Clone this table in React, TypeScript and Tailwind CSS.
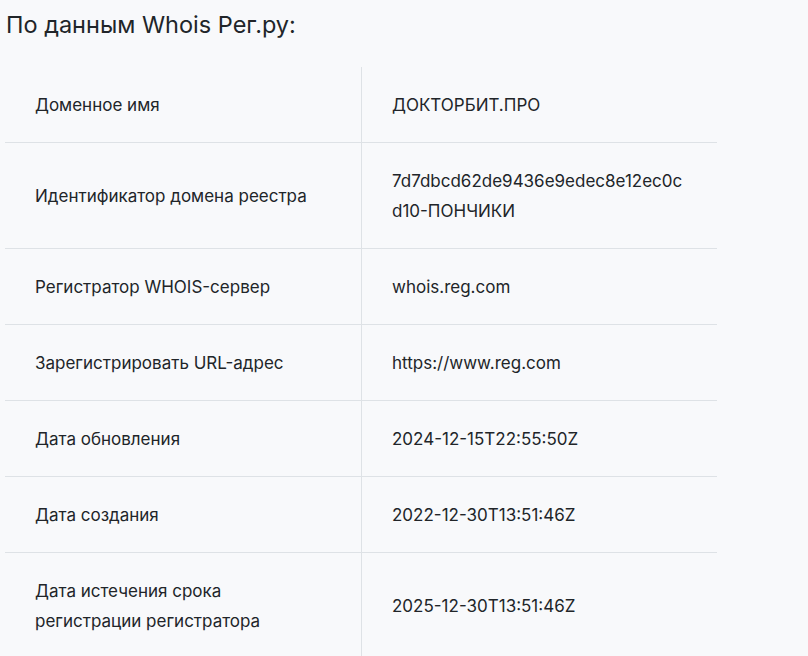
import React from "react";

const rows: [string, string][] = [
  ["Доменное имя", "ДОКТОРБИТ.ПРО"],
  ["Идентификатор домена реестра", "7d7dbcd62de9436e9edec8e12ec0cd10-ПОНЧИКИ"],
  ["Регистратор WHOIS-сервер", "whois.reg.com"],
  ["Зарегистрировать URL-адрес", "https://www.reg.com"],
  ["Дата обновления", "2024-12-15T22:55:50Z"],
  ["Дата создания", "2022-12-30T13:51:46Z"],
  ["Дата истечения срока регистрации регистратора", "2025-12-30T13:51:46Z"],
];

export default function App() {
  return (
    <div
      className="min-h-[656px] w-[808px] overflow-hidden bg-[#f8f9fb] text-[#212529]"
      style={{ fontFamily: "Inter, 'Noto Sans', sans-serif" }}
    >
      <h2 className="pl-[6px] pt-[10px] text-[23.5px] leading-[29px] font-normal">
        По данным Whois Рег.ру:
      </h2>
      <div className="ml-[5px] mt-[28px] w-[712px]">
        {rows.map(([k, v], i) => (
          <div
            key={i}
            className={`grid grid-cols-[357px_355px] text-[17px] leading-[30px] ${
              i < rows.length - 1 ? "border-b border-[#dee2e6]" : ""
            }`}
          >
            <div className="flex items-center border-r border-[#dee2e6] pl-[30px] pr-[30px] pt-[23px] pb-[22px]">
              {k}
            </div>
            <div className="flex items-center pl-[30px] pr-[30px] pt-[23px] pb-[22px] break-all">
              {v}
            </div>
          </div>
        ))}
      </div>
    </div>
  );
}
